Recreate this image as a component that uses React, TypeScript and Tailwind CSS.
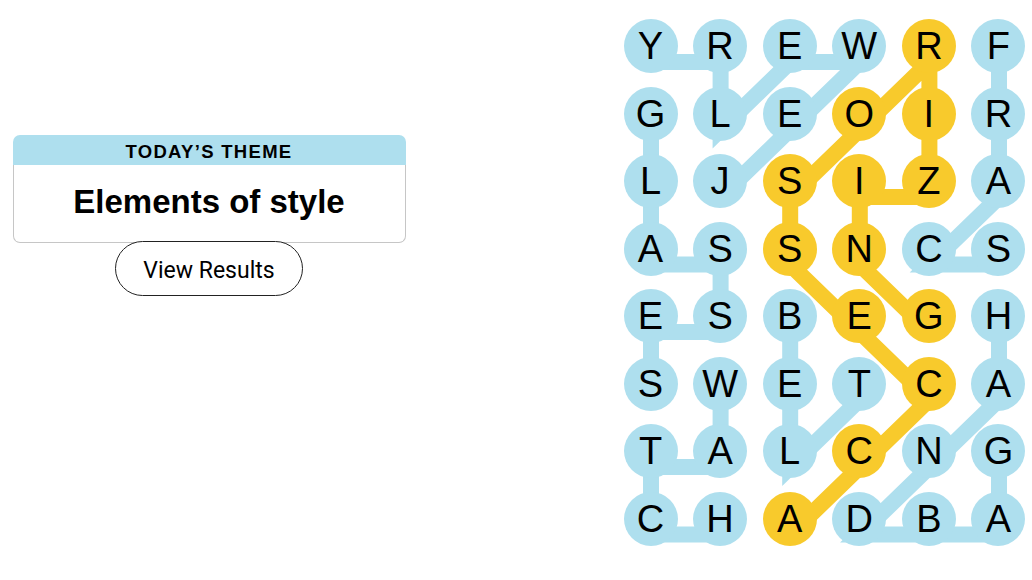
import React from "react";

const BLUE = "#aedfee";
const GOLD = "#f8ca2c";

const rows = ["YREWRF", "GLEOIR", "LJSIZA", "ASSNCS", "ESBEGH", "SWETCA", "TALCNG", "CHADBA"];

type Cell = [number, number];

interface Word {
  word: string;
  spangram?: boolean;
  path: Cell[];
}

const words: Word[] = [
  { word: "JEWELRY", path: [[2, 1], [1, 2], [0, 3], [0, 2], [1, 1], [0, 1], [0, 0]] },
  { word: "GLASSES", path: [[1, 0], [2, 0], [3, 0], [3, 1], [4, 1], [4, 0], [5, 0]] },
  { word: "WATCH", path: [[5, 1], [6, 1], [6, 0], [7, 0], [7, 1]] },
  { word: "BELT", path: [[4, 2], [5, 2], [6, 2], [5, 3]] },
  { word: "SCARF", path: [[3, 5], [3, 4], [2, 5], [1, 5], [0, 5]] },
  { word: "HANDBAG", path: [[4, 5], [5, 5], [6, 4], [7, 3], [7, 4], [7, 5], [6, 5]] },
  {
    word: "ACCESSORIZING",
    spangram: true,
    path: [[7, 2], [6, 3], [5, 4], [4, 3], [3, 2], [2, 2], [1, 3], [0, 4], [1, 4], [2, 4], [2, 3], [3, 3], [4, 4]],
  },
];

// cell geometry, matches the grid classes below
const SIZE = 54;
const STEP_X = 69.6;
const STEP_Y = 67.5;
const LINE_DROP = 16; // connectors sit a little below the circle centres

const gold = new Set(
  words.filter((w) => w.spangram).flatMap((w) => w.path.map(([r, c]) => `${r}-${c}`))
);

function Connectors() {
  return (
    <svg
      className="absolute top-0 left-0 overflow-visible pointer-events-none"
      width={SIZE + STEP_X * 5}
      height={SIZE + STEP_Y * 7}
    >
      {words.map((w) => (
        <polyline
          key={w.word}
          points={w.path
            .map(([r, c]) => `${SIZE / 2 + c * STEP_X},${SIZE / 2 + r * STEP_Y + LINE_DROP}`)
            .join(" ")}
          fill="none"
          stroke={w.spangram ? GOLD : BLUE}
          strokeWidth={16}
          strokeLinejoin="miter"
          strokeLinecap="butt"
        />
      ))}
    </svg>
  );
}

function Board() {
  return (
    <div className="relative mt-[19px]">
      <Connectors />
      <div className="relative grid grid-cols-[repeat(6,54px)] gap-x-[15.6px] gap-y-[13.5px]">
        {rows.flatMap((row, r) =>
          row.split("").map((ch, c) => (
            <div
              key={`${r}-${c}`}
              className={`w-[54px] h-[54px] rounded-full flex items-center justify-center text-[38px] leading-none text-black ${
                gold.has(`${r}-${c}`) ? "bg-[#f8ca2c]" : "bg-[#aedfee]"
              }`}
            >
              {ch}
            </div>
          ))
        )}
      </div>
    </div>
  );
}

export default function App() {
  return (
    <div className="w-[1032px] h-[580px] bg-white flex font-['Liberation_Sans',Arial,sans-serif]">
      {/* Theme panel */}
      <div className="w-[623.5px] pl-[12.5px] pt-[135px]">
        <div className="w-[393px] flex flex-col items-center">
          <div className="w-full rounded-t-[7px] bg-[#aedfee] h-[30px] flex items-center justify-center">
            <span className="text-[18.5px] font-bold tracking-[1.3px] text-black pt-[4px]">TODAY’S THEME</span>
          </div>
          <div className="w-full h-[78px] border border-t-0 border-[#c6c6c6] rounded-b-[7px] flex items-center justify-center pb-[4px]">
            <h1 className="text-[33px] font-bold text-black">Elements of style</h1>
          </div>
          <button className="-mt-[2px] w-[188px] h-[55px] rounded-full border border-[#222] bg-white flex items-center justify-center pt-[5px] font-['Roboto',sans-serif] text-[23px] text-black">
            View Results
          </button>
        </div>
      </div>

      {/* Strands board */}
      <Board />
    </div>
  );
}
